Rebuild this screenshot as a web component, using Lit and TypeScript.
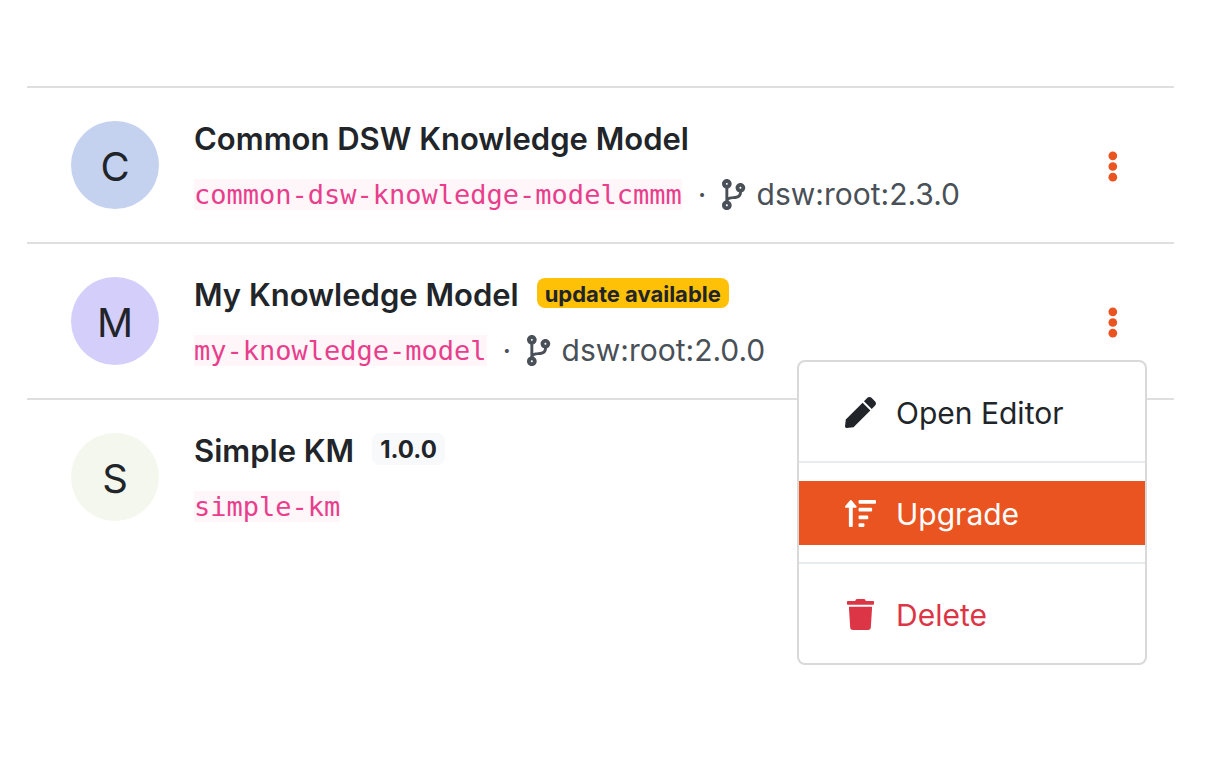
import { LitElement, html, css, svg, nothing } from "lit";
import { customElement, property, state } from "lit/decorators.js";

const ICONS = {
  branch: {
    box: "0 0 384 512",
    path: svg`<path d="M384 144c0-44.2-35.8-80-80-80s-80 35.8-80 80c0 36.4 24.3 67.1 57.5 76.8-.6 16.1-4.2 28.5-11 36.9-15.4 19.2-49.3 22.4-85.2 25.7-28.2 2.6-57.4 5.4-81.3 16.9v-144c32.5-10.2 56-40.5 56-76.3 0-44.2-35.8-80-80-80S0 35.8 0 80c0 35.8 23.5 66.1 56 76.3v199.3C23.5 365.9 0 396.2 0 432c0 44.2 35.8 80 80 80s80-35.8 80-80c0-34-21.2-63.1-51.2-74.6 3.1-5.2 7.8-9.8 14.9-13.4 16.2-8.2 40.4-10.4 66.1-12.8 42.2-3.9 90-8.4 118.2-43.4 14-17.4 21.1-39.8 21.6-67.9 31.6-10.8 54.4-40.7 54.4-75.9zM80 64c8.8 0 16 7.2 16 16s-7.2 16-16 16-16-7.2-16-16 7.2-16 16-16zm0 384c-8.8 0-16-7.2-16-16s7.2-16 16-16 16 7.2 16 16-7.2 16-16 16zm224-320c8.8 0 16 7.2 16 16s-7.2 16-16 16-16-7.2-16-16 7.2-16 16-16z"/>`,
  },
  pen: {
    box: "0 0 512 512",
    path: svg`<path d="M290.74 93.24l128.02 128.02-277.99 277.99-114.14 12.6C11.35 513.54-1.56 500.62.14 485.34l12.7-114.22 277.9-277.88zm207.2-19.06l-60.11-60.11c-18.75-18.75-49.16-18.75-67.91 0l-56.55 56.55 128.02 128.02 56.55-56.55c18.75-18.76 18.75-49.16 0-67.91z"/>`,
  },
  upgrade: {
    box: "0 0 512 512",
    path: svg`<path d="M16 160h48v304a16 16 0 0 0 16 16h32a16 16 0 0 0 16-16V160h48c14.2 0 21.4-17.2 11.3-27.3l-80-96a16 16 0 0 0-22.6 0l-80 96C-5.3 142.7 1.8 160 16 160z"/><rect x="224" y="32" width="288" height="64" rx="16"/><rect x="224" y="160" width="224" height="64" rx="16"/><rect x="224" y="288" width="160" height="64" rx="16"/><rect x="224" y="416" width="96" height="64" rx="16"/>`,
  },
  trash: {
    box: "0 0 448 512",
    path: svg`<path d="M432 32H312l-9.4-18.7A24 24 0 0 0 281.1 0H166.8a23.72 23.72 0 0 0-21.4 13.3L136 32H16A16 16 0 0 0 0 48v32a16 16 0 0 0 16 16h416a16 16 0 0 0 16-16V48a16 16 0 0 0-16-16zM53.2 467a48 48 0 0 0 47.9 45h245.8a48 48 0 0 0 47.9-45L416 128H32z"/>`,
  },
  dots: {
    box: "0 0 192 512",
    path: svg`<circle cx="96" cy="80" r="72"/><circle cx="96" cy="256" r="72"/><circle cx="96" cy="432" r="72"/>`,
  },
};

type IconName = keyof typeof ICONS;

const icon = (name: IconName) =>
  html`<svg class="icon" viewBox=${ICONS[name].box} aria-hidden="true">${ICONS[name].path}</svg>`;

interface Model {
  name: string;
  id: string;
  tone: string;
  parent?: string;
  outdated?: boolean;
  version?: string;
}

const MODELS: Model[] = [
  { name: "Common DSW Knowledge Model", id: "common-dsw-knowledge-modelcmmm", tone: "blue", parent: "dsw:root:2.3.0" },
  { name: "My Knowledge Model", id: "my-knowledge-model", tone: "violet", parent: "dsw:root:2.0.0", outdated: true },
  { name: "Simple KM", id: "simple-km", tone: "green", version: "1.0.0" },
];

@customElement("model-menu")
export class ModelMenu extends LitElement {
  static styles = css`
    :host {
      display: block;
      box-sizing: border-box;
      width: 350px;
      padding: 18px 0 17px;
      background: #fff;
      border: 2px solid #d9d9d9;
      border-radius: 8px;
    }
    .item {
      display: flex;
      align-items: center;
      gap: 20px;
      box-sizing: border-box;
      width: 100%;
      height: 64px;
      padding: 2px 46px 0;
      border: 0;
      background: none;
      color: #212529;
      font: inherit;
      text-align: left;
      cursor: pointer;
    }
    .active {
      background: #e95420;
      color: #fff;
    }
    .danger {
      color: #dc3545;
    }
    .icon {
      width: 31px;
      height: 31px;
      fill: currentColor;
    }
    .divider {
      height: 2px;
      margin: 17px 0 18px;
      border: 0;
      background: #e9ecef;
    }
  `;

  render() {
    return html`
      <button class="item" role="menuitem">${icon("pen")}Open Editor</button>
      <hr class="divider" />
      <button class="item active" role="menuitem">${icon("upgrade")}Upgrade</button>
      <hr class="divider" />
      <button class="item danger" role="menuitem">${icon("trash")}Delete</button>
    `;
  }
}

@customElement("model-row")
export class ModelRow extends LitElement {
  @property({ attribute: false }) model!: Model;
  @property({ type: Boolean }) open = false;

  static styles = css`
    :host {
      display: flex;
      align-items: center;
      gap: 35px;
      box-sizing: border-box;
      height: 156px;
      padding: 0 44px;
      border-top: 2px solid #dfdfdf;
    }
    .avatar {
      display: flex;
      align-items: center;
      justify-content: center;
      flex: none;
      box-sizing: border-box;
      width: 88px;
      height: 88px;
      padding-top: 3px;
      border-radius: 50%;
      font-size: 40px;
    }
    .blue {
      background: #c4d2ef;
    }
    .violet {
      background: #d4cefb;
    }
    .green {
      background: #f4f7ed;
    }
    .details {
      flex: 1;
      min-width: 0;
      padding-top: 3px;
    }
    .line {
      display: flex;
      align-items: center;
      height: 48px;
      white-space: nowrap;
    }
    .title {
      gap: 18px;
      margin-bottom: 7px;
    }
    .name {
      margin: 0;
      font-size: 31px;
      font-weight: 600;
    }
    .badge {
      margin-bottom: 4px;
      padding: 2px 8px 0;
      border-radius: 8px;
      font-size: 22px;
      font-weight: 700;
      line-height: 28px;
    }
    .update {
      background: #ffc107;
    }
    .version {
      background: #f8f9fa;
      font-size: 24px;
      line-height: 30px;
    }
    .meta {
      color: #495057;
    }
    .id {
      background: #fef6f9;
      color: #e83e8c;
      font: 27px/31px "DejaVu Sans Mono", monospace;
    }
    .dot {
      margin: 0 16px;
    }
    .parent {
      display: flex;
      align-items: center;
      gap: 11px;
    }
    .icon {
      height: 31px;
      fill: currentColor;
    }
    .actions {
      position: relative;
      margin-top: 2px;
    }
    .toggle {
      display: flex;
      justify-content: center;
      width: 34px;
      padding: 0;
      border: 0;
      background: none;
      color: #e95420;
      cursor: pointer;
    }
    .menu {
      position: absolute;
      top: 53px;
      right: -17px;
      z-index: 1;
    }
  `;

  private toggle() {
    this.dispatchEvent(new CustomEvent("toggle-menu"));
  }

  render() {
    const { name, id, tone, parent, outdated, version } = this.model;
    return html`
      <div class="avatar ${tone}" aria-hidden="true">${name[0]}</div>
      <div class="details">
        <div class="line title">
          <h2 class="name">${name}</h2>
          ${outdated ? html`<span class="badge update">update available</span>` : nothing}
          ${version ? html`<span class="badge version">${version}</span>` : nothing}
        </div>
        <div class="line meta">
          <code class="id">${id}</code>
          ${parent
            ? html`<span class="dot">·</span><span class="parent">${icon("branch")}${parent}</span>`
            : nothing}
        </div>
      </div>
      ${version
        ? nothing
        : html`<div class="actions">
            <button class="toggle" aria-label="Actions for ${name}" aria-expanded=${this.open} @click=${this.toggle}>
              ${icon("dots")}
            </button>
            ${this.open ? html`<model-menu class="menu" role="menu"></model-menu>` : nothing}
          </div>`}
    `;
  }
}

@customElement("app-root")
export class AppRoot extends LitElement {
  @state() private openId = "my-knowledge-model";

  static styles = css`
    :host {
      display: block;
      box-sizing: border-box;
      min-height: 100vh;
      padding: 86px 38px 0 27px;
      background: #fff;
      color: #212529;
      font-family: Inter, "Liberation Sans", sans-serif;
      font-size: 30px;
      line-height: 48px;
    }
  `;

  render() {
    return html`<main>
      ${MODELS.map(
        (m) => html`<model-row
          .model=${m}
          ?open=${m.id === this.openId}
          @toggle-menu=${() => (this.openId = this.openId === m.id ? "" : m.id)}
        ></model-row>`
      )}
    </main>`;
  }
}
